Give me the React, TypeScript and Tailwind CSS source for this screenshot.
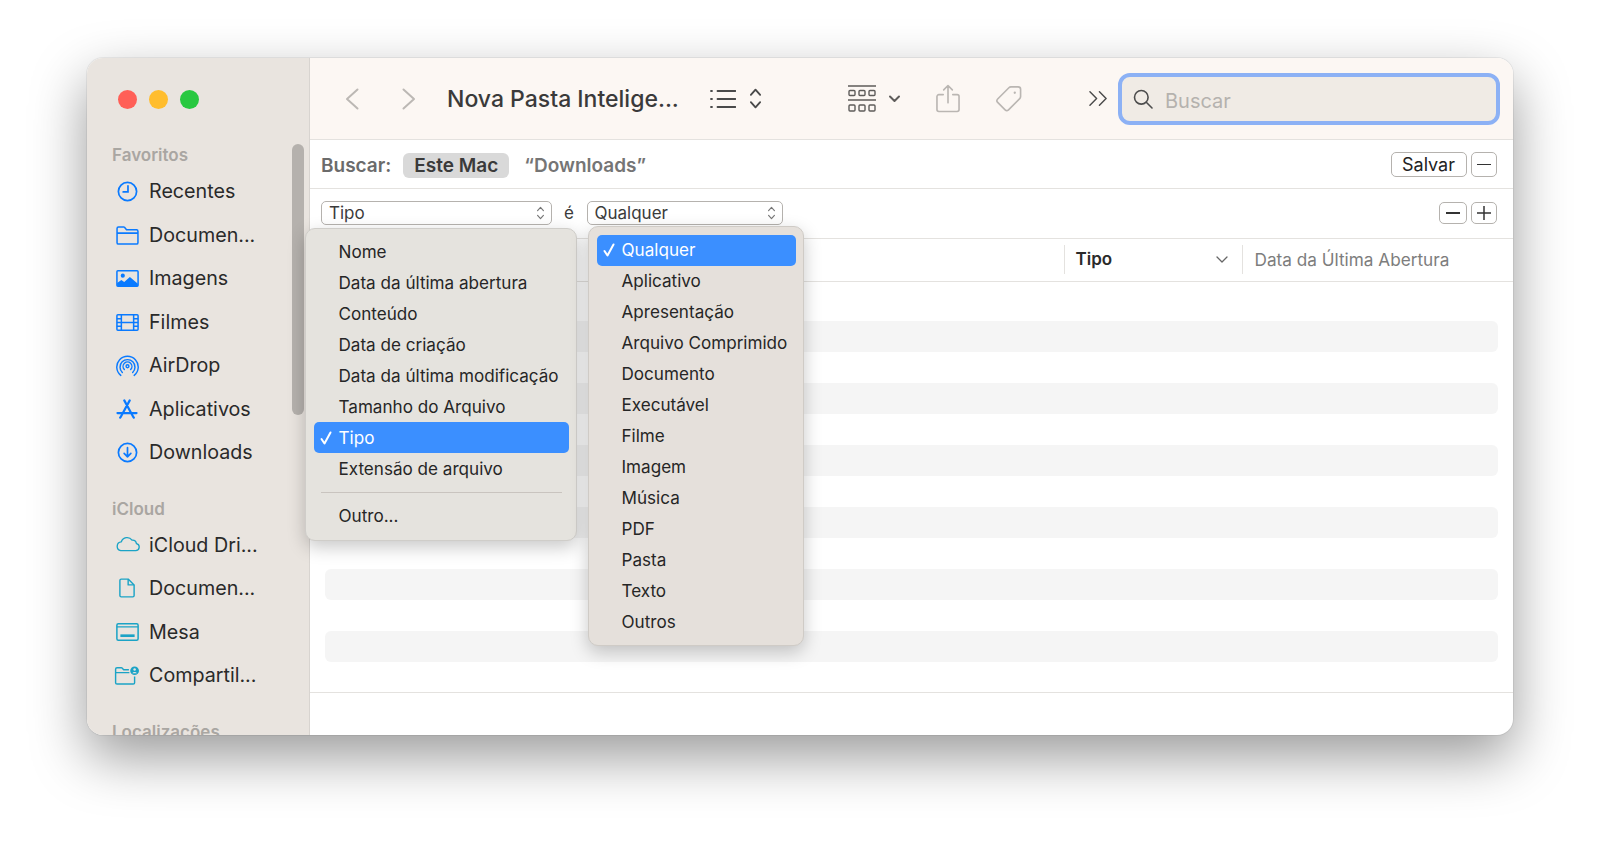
import React from "react";

const fontClass = "font-['Inter','Noto_Sans',sans-serif]";

type IconProps = { className?: string };

function ClockIcon({ className }: IconProps) {
  return (
    <svg className={className} viewBox="0 0 24 24" fill="none" stroke="currentColor" strokeWidth="1.8" strokeLinecap="round">
      <circle cx="12" cy="12" r="9.5" />
      <path d="M12.5 6v6.5H7.5" />
    </svg>
  );
}

function FolderIcon({ className }: IconProps) {
  return (
    <svg className={className} viewBox="0 0 24 20" fill="none" stroke="currentColor" strokeWidth="1.6" strokeLinejoin="round">
      <path d="M1 3v14.5A1.5 1.5 0 0 0 2.5 19h19a1.5 1.5 0 0 0 1.5-1.5V5.5A1.5 1.5 0 0 0 21.5 4H11L8.8 1.3a1 1 0 0 0-.7-.3H2.5A1.5 1.5 0 0 0 1 2.5z" />
      <path d="M1 7.5h22" />
    </svg>
  );
}

function PhotoIcon({ className }: IconProps) {
  return (
    <svg className={className} viewBox="0 0 24 18" fill="none">
      <rect x="0.8" y="0.8" width="22.4" height="16.4" rx="1" stroke="currentColor" strokeWidth="1.6" />
      <circle cx="7" cy="6" r="2.2" fill="currentColor" />
      <path d="M1 17v-3.2l4.5-3.3 3 2.1 6-5.3 8.5 7.2V17z" fill="currentColor" />
    </svg>
  );
}

function FilmIcon({ className }: IconProps) {
  return (
    <svg className={className} viewBox="0 0 24 18" fill="none" stroke="currentColor" strokeWidth="1.6">
      <rect x="0.8" y="0.8" width="22.4" height="16.4" rx="1" />
      <path d="M5.5 0.8v16.4M18.5 0.8v16.4M5.5 9h13M0.8 5h4.7M0.8 9h4.7M0.8 13h4.7M18.5 5h4.7M18.5 9h4.7M18.5 13h4.7" />
    </svg>
  );
}

function AirDropIcon({ className }: IconProps) {
  return (
    <svg className={className} viewBox="0 0 24 24" fill="none" stroke="currentColor" strokeWidth="1.5" strokeLinecap="round">
      <path d="M5 22.3A11.2 11.2 0 1 1 19 22.3" />
      <path d="M6.6 19.3A7.8 7.8 0 1 1 17.4 19.3" />
      <path d="M8.7 16.2A4.6 4.6 0 1 1 15.3 16.2" />
      <circle cx="12" cy="12.8" r="1.5" />
    </svg>
  );
}

function AppsIcon({ className }: IconProps) {
  return (
    <svg className={className} viewBox="0 0 24 22" fill="none" stroke="currentColor" strokeWidth="2.4" strokeLinecap="round">
      <path d="M9 1.5 18.5 19M15 1.5 5.5 19M1.5 15.5h21M18.5 19l1 1.5M5.5 19l-1 1.5" />
    </svg>
  );
}

function DownloadIcon({ className }: IconProps) {
  return (
    <svg className={className} viewBox="0 0 24 24" fill="none" stroke="currentColor" strokeWidth="1.8" strokeLinecap="round" strokeLinejoin="round">
      <circle cx="12" cy="12" r="9.5" />
      <path d="M12 7v9.5M8.5 13l3.5 3.5 3.5-3.5" />
    </svg>
  );
}

function CloudIcon({ className }: IconProps) {
  return (
    <svg className={className} viewBox="0 3 26 15" fill="none" stroke="currentColor" strokeWidth="1.4" strokeLinejoin="round">
      <path d="M6 16.8h15.5a3.7 3.7 0 0 0 .8-7.3 4.3 4.3 0 0 0-4.6-3.6A6.3 6.3 0 0 0 6.6 7.7 4.6 4.6 0 0 0 6 16.8z" />
    </svg>
  );
}

function DocIcon({ className }: IconProps) {
  return (
    <svg className={className} viewBox="0 0 18 22" fill="none" stroke="currentColor" strokeWidth="1.6" strokeLinejoin="round">
      <path d="M2.5 1h7.8L17 7.5v12a1.5 1.5 0 0 1-1.5 1.5h-13A1.5 1.5 0 0 1 1 19.5v-17A1.5 1.5 0 0 1 2.5 1z" />
      <path d="M10.3 1v6.5H17" />
    </svg>
  );
}

function DesktopIcon({ className }: IconProps) {
  return (
    <svg className={className} viewBox="0 0 24 19" fill="none">
      <rect x="0.8" y="0.8" width="22.4" height="17.4" rx="1.5" stroke="currentColor" strokeWidth="1.6" />
      <path d="M0.8 4h22.4" stroke="currentColor" strokeWidth="1.4" />
      <rect x="4.5" y="12" width="15" height="2.8" fill="currentColor" />
    </svg>
  );
}

function SharedFolderIcon({ className }: IconProps) {
  return (
    <svg className={className} viewBox="0 0 26 20" fill="none">
      <path d="M1 4v13.5A1.5 1.5 0 0 0 2.5 19h17a1.5 1.5 0 0 0 1.5-1.5V11M15 4H9.5L7.8 2.2a1 1 0 0 0-.7-.3H2.5A1.5 1.5 0 0 0 1 3.4V7h14.5" stroke="currentColor" strokeWidth="1.5" strokeLinejoin="round" />
      <circle cx="21" cy="5" r="4.6" fill="currentColor" />
      <circle cx="21" cy="3.6" r="1.3" fill="#e9e4df" />
      <path d="M18.6 7.6a2.6 2.2 0 0 1 4.8 0z" fill="#e9e4df" />
    </svg>
  );
}

function Chevron({ dir }: { dir: "left" | "right" }) {
  return (
    <svg className="h-[22px] w-[14px] text-[#bcb8b4]" viewBox="0 0 14 22" fill="none" stroke="currentColor" strokeWidth="2" strokeLinecap="round" strokeLinejoin="round">
      <path d={dir === "left" ? "M12.5 1.5 2 11l10.5 9.5" : "M1.5 1.5 12 11 1.5 20.5"} />
    </svg>
  );
}

function UpDown({ className }: IconProps) {
  return (
    <svg className={className} viewBox="0 0 14 24" fill="none" stroke="currentColor" strokeWidth="2" strokeLinecap="round" strokeLinejoin="round">
      <path d="M2 8l5-5.5L12 8M2 16l5 5.5 5-5.5" />
    </svg>
  );
}

function SelectBox({ label, width }: { label: string; width: string }) {
  return (
    <div className={`flex h-[24.5px] items-center justify-between rounded-[5px] border border-[#b5b2ae] bg-white pl-[7px] pr-[6px] text-[17px] text-[#3b3b3b] ${width}`}>
      <span className="pt-[2px]">{label}</span>
      <UpDown className="h-[14px] w-[9px] text-[#777]" />
    </div>
  );
}

function SmallButton({ children, size }: { children: React.ReactNode; size: string }) {
  return (
    <div className={`flex items-center justify-center rounded-[5px] border border-[#b5b2ae] bg-white text-[18px] text-[#222] ${size}`}>
      {children}
    </div>
  );
}

function Minus() {
  return <div className="h-[1.5px] w-[14px] bg-[#333]" />;
}

function Plus() {
  return (
    <svg className="h-[16px] w-[16px] text-[#333]" viewBox="0 0 16 16" stroke="currentColor" strokeWidth="1.5">
      <path d="M1 8h14M8 1v14" />
    </svg>
  );
}

function Check() {
  return (
    <svg className="h-[14px] w-[12px] text-white" viewBox="0 0 12 14" fill="none" stroke="currentColor" strokeWidth="2" strokeLinecap="round" strokeLinejoin="round">
      <path d="M1.5 8 4.5 12.5 10.5 1.5" />
    </svg>
  );
}

function SidebarRow({ icon, label }: { icon: React.ReactNode; label: string }) {
  return (
    <div className="flex h-[43.5px] items-center">
      <div className="w-[62px] pl-[27px]">
        <div className="flex w-[26px] justify-center">{icon}</div>
      </div>
      <span className="pt-[1px] text-[19.7px] text-[#2a2a2a]">{label}</span>
    </div>
  );
}

function SidebarHeading({ children }: { children: React.ReactNode }) {
  return <div className="h-[24px] pl-[25px] text-[17px] font-semibold leading-[24px] text-[#a9a6a2]">{children}</div>;
}

function MenuItem({ label, selected }: { label: string; selected?: boolean }) {
  if (selected) {
    return (
      <div className="flex h-[31px] items-center rounded-[5px] bg-[#3b8fff] pl-[6px] text-[17.1px] text-white">
        <span className="flex w-[19px]">
          <Check />
        </span>
        {label}
      </div>
    );
  }
  return <div className="flex h-[31px] items-center pl-[25px] text-[17.1px] text-[#262626]">{label}</div>;
}

const kindMenu = ["Nome", "Data da última abertura", "Conteúdo", "Data de criação", "Data da última modificação", "Tamanho do Arquivo"];
const anyMenu = ["Aplicativo", "Apresentação", "Arquivo Comprimido", "Documento", "Executável", "Filme", "Imagem", "Música", "PDF", "Pasta", "Texto", "Outros"];

export default function App() {
  return (
    <div className={`h-[850px] w-[1600px] overflow-hidden bg-white pl-[87px] pt-[58px] ${fontClass}`}>
      <div className="relative flex h-[677px] w-[1426px] overflow-hidden rounded-[16px] bg-white shadow-[0_22px_55px_rgba(0,0,0,0.4),0_0_0_1px_rgba(0,0,0,0.06)]">
        {/* sidebar */}
        <aside className="relative w-[223px] shrink-0 border-r border-[#d8d4d0] bg-[#e9e4df]">
          <div className="flex h-[85px] items-start gap-[12px] pl-[31px] pt-[32px]">
            <div className="h-[19px] w-[19px] rounded-full bg-[#ff5f57]" />
            <div className="h-[19px] w-[19px] rounded-full bg-[#ffbd2e]" />
            <div className="h-[19px] w-[19px] rounded-full bg-[#28c840]" />
          </div>
          <SidebarHeading>Favoritos</SidebarHeading>
          <div className="pt-[3px] text-[#0a7aff]">
            <SidebarRow icon={<ClockIcon className="h-[23px] w-[23px]" />} label="Recentes" />
            <SidebarRow icon={<FolderIcon className="h-[19px] w-[23px]" />} label="Documen..." />
            <SidebarRow icon={<PhotoIcon className="h-[17px] w-[23px]" />} label="Imagens" />
            <SidebarRow icon={<FilmIcon className="h-[17px] w-[23px]" />} label="Filmes" />
            <SidebarRow icon={<AirDropIcon className="h-[23px] w-[23px]" />} label="AirDrop" />
            <SidebarRow icon={<AppsIcon className="h-[20px] w-[22px]" />} label="Aplicativos" />
            <SidebarRow icon={<DownloadIcon className="h-[23px] w-[23px]" />} label="Downloads" />
          </div>
          <div className="mt-[22.6px]">
            <SidebarHeading>iCloud</SidebarHeading>
          </div>
          <div className="pt-[2px] text-[#1ba3c6]">
            <SidebarRow icon={<CloudIcon className="h-[17px] w-[25px]" />} label="iCloud Dri..." />
            <SidebarRow icon={<DocIcon className="h-[20px] w-[16px]" />} label="Documen..." />
            <SidebarRow icon={<DesktopIcon className="h-[18px] w-[23px]" />} label="Mesa" />
            <SidebarRow icon={<SharedFolderIcon className="h-[19px] w-[26px]" />} label="Compartil..." />
          </div>
          <div className="mt-[23px]">
            <SidebarHeading>Localizações</SidebarHeading>
          </div>
          <div className="absolute left-[205px] top-[86px] h-[271px] w-[12px] rounded-full bg-[#b5b1ad]" />
        </aside>

        {/* main */}
        <main className="flex min-w-0 flex-1 flex-col">
          <div className="flex h-[82px] shrink-0 items-center border-b border-[#e4e2df] bg-[#fcf7f3] pl-[35px]">
            <Chevron dir="left" />
            <div className="ml-[43px]">
              <Chevron dir="right" />
            </div>
            <div className="ml-[31px] w-[263px] pt-[2px] text-[23px] font-medium text-[#3a3a3a]">Nova Pasta Intelige...</div>
            <svg className="h-[20px] w-[26px] text-[#4a4a4a]" viewBox="0 0 26 20" fill="none" stroke="currentColor" strokeLinecap="round">
              <path d="M7.5 2h18M7.5 10h18M7.5 18h18M1 2h1M1 10h1M1 18h1" strokeWidth="1.8" />
            </svg>
            <UpDown className="ml-[13px] h-[23px] w-[13px] text-[#4a4a4a]" />
            <svg className="ml-[86px] h-[28px] w-[28px] text-[#5e5c5a]" viewBox="0 0 28 28" fill="none" stroke="currentColor" strokeWidth="1.4">
              <path d="M0 1h28M0 15h28" strokeWidth="1.6" />
              <rect x="1" y="5.5" width="6" height="5" rx="1" />
              <rect x="11" y="5.5" width="6" height="5" rx="1" />
              <rect x="21" y="5.5" width="6" height="5" rx="1" />
              <rect x="1" y="20" width="6" height="6" rx="1" />
              <rect x="11" y="20" width="6" height="6" rx="1" />
              <rect x="21" y="20" width="6" height="6" rx="1" />
            </svg>
            <svg className="ml-[12px] h-[8px] w-[13px] text-[#5e5c5a]" viewBox="0 0 12 8" fill="none" stroke="currentColor" strokeWidth="2" strokeLinecap="round" strokeLinejoin="round">
              <path d="M1.5 1.5 6 6l4.5-4.5" />
            </svg>
            <svg className="ml-[35px] h-[29px] w-[24px] text-[#bab6b2]" viewBox="0 0 25 29" fill="none" stroke="currentColor" strokeWidth="1.7" strokeLinecap="round" strokeLinejoin="round">
              <path d="M12.5 19V1.5M8 5.5l4.5-4.5L17 5.5M7.5 10.5H3A2 2 0 0 0 1 12.5v13.5a2 2 0 0 0 2 2h19a2 2 0 0 0 2-2V12.5a2 2 0 0 0-2-2h-4.5" />
            </svg>
            <svg className="ml-[34px] h-[30px] w-[29px] text-[#bab6b2]" viewBox="0 0 30 30" fill="none" stroke="currentColor" strokeWidth="1.7" strokeLinejoin="round">
              <path d="M17.5 2.5h7.5a2.5 2.5 0 0 1 2.5 2.5v7.5a3 3 0 0 1-.9 2.1L15 26.2a2.5 2.5 0 0 1-3.5 0l-7.7-7.7a2.5 2.5 0 0 1 0-3.5L15.4 3.4a3 3 0 0 1 2.1-.9z" />
              <circle cx="21.5" cy="8.5" r="1.2" fill="currentColor" stroke="none" />
            </svg>
            <svg className="ml-[66px] h-[17px] w-[19px] text-[#4a4a4a]" viewBox="0 0 20 16" fill="none" stroke="currentColor" strokeWidth="1.5" strokeLinecap="round" strokeLinejoin="round">
              <path d="M1 1l7 7-7 7M11 1l7 7-7 7" />
            </svg>
            <div className="ml-[10px] flex h-[52px] w-[382px] items-center rounded-[12px] border-[4px] border-[#8cb1f5] bg-[#f0ebe5] pl-[11px]">
              <svg className="h-[20px] w-[20px] text-[#4d4d4d]" viewBox="0 0 20 20" fill="none" stroke="currentColor" strokeWidth="1.6" strokeLinecap="round">
                <circle cx="8.3" cy="8.3" r="6.8" />
                <path d="M13.3 13.3 19 19" />
              </svg>
              <span className="ml-[12px] pt-[5px] text-[20px] text-[#b5b2ae]">Buscar</span>
            </div>
          </div>

          <div className="flex h-[48.5px] shrink-0 items-center border-b border-[#e4e2df] pl-[11px] pr-[16px] pt-[3px] text-[19px] font-semibold">
            <span className="pt-[2px] text-[#6b6b6b]">Buscar:</span>
            <span className="ml-[12px] flex h-[25px] w-[106px] items-center justify-center rounded-[6px] bg-[#d9d9d9] pt-[2px] text-[#3a3a3a]">Este Mac</span>
            <span className="ml-[15px] pt-[2px] text-[#757575]">“Downloads”</span>
            <div className="ml-auto flex -translate-y-[1px] items-center gap-[4px] font-normal">
              <SmallButton size="h-[24.5px] w-[76px]">Salvar</SmallButton>
              <SmallButton size="h-[24.5px] w-[26.5px]">
                <Minus />
              </SmallButton>
            </div>
          </div>

          <div className="flex h-[50px] shrink-0 items-center border-b border-[#e4e2df] pl-[11px] pr-[16px]">
            <SelectBox label="Tipo" width="w-[230.5px]" />
            <span className="w-[35px] pt-[1px] text-center text-[17px] text-[#3b3b3b]">é</span>
            <SelectBox label="Qualquer" width="w-[196.5px]" />
            <div className="ml-auto flex items-center gap-[4px]">
              <SmallButton size="h-[22.5px] w-[28px]">
                <Minus />
              </SmallButton>
              <SmallButton size="h-[22.5px] w-[26.5px]">
                <Plus />
              </SmallButton>
            </div>
          </div>

          <div className="flex h-[43px] shrink-0 items-center justify-end border-b border-[#e4e2df]">
            <div className="flex h-[29px] w-[178.5px] items-center border-l border-[#e4e2df] pl-[11px]">
              <span className="text-[17px] font-semibold text-[#2a2a2a]">Tipo</span>
              <svg className="ml-auto mr-[14px] h-[7px] w-[12px] text-[#666]" viewBox="0 0 12 7" fill="none" stroke="currentColor" strokeWidth="1.3" strokeLinecap="round" strokeLinejoin="round">
                <path d="M1 1l5 5 5-5" />
              </svg>
            </div>
            <div className="flex h-[29px] w-[271px] items-center border-l border-[#e4e2df] pl-[11.5px] text-[17.2px] text-[#7d7d7d]">Data da Última Abertura</div>
          </div>

          <div className="flex h-[411px] shrink-0 flex-col gap-[31.2px] border-b border-[#e4e2df] pl-[15px] pr-[15.5px] pt-[39px]">
            {[0, 1, 2, 3, 4, 5].map((i) => (
              <div key={i} className="h-[31px] shrink-0 rounded-[6px] bg-[#f5f5f5]" />
            ))}
          </div>
        </main>

        {/* popup menus */}
        <div className="absolute left-[218px] top-[169.5px] w-[272px] rounded-[10px] border border-[#cfcdc9] bg-[#e5e3de] px-[7.5px] pb-[9px] pt-[7.5px] shadow-[0_6px_18px_rgba(0,0,0,0.22)]">
          {kindMenu.map((item) => (
            <MenuItem key={item} label={item} />
          ))}
          <MenuItem label="Tipo" selected />
          <MenuItem label="Extensão de arquivo" />
          <div className="mx-[7px] my-[7.5px] h-px bg-[#c9c4bf]" />
          <MenuItem label="Outro..." />
        </div>
        <div className="absolute left-[501px] top-[168px] w-[216px] rounded-[10px] border border-[#cfcbc6] bg-[#e5e0db] p-[7.5px] shadow-[0_6px_18px_rgba(0,0,0,0.22)]">
          <MenuItem label="Qualquer" selected />
          {anyMenu.map((item) => (
            <MenuItem key={item} label={item} />
          ))}
        </div>
      </div>
    </div>
  );
}
